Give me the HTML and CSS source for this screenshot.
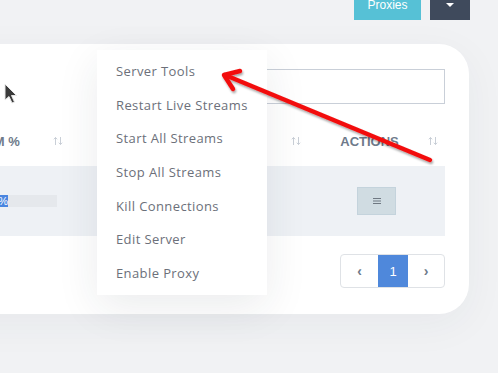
FILE: index.html
```html
<!DOCTYPE html>
<html lang="en">
<head>
  <meta charset="UTF-8">
  <title>Servers</title>
  <link rel="stylesheet" href="styles.css">
</head>
<body>
  <div class="topbar">
    <button class="btn btn-proxies">Proxies</button>
    <button class="btn btn-caret"><span class="caret"></span></button>
  </div>

  <div class="card">
    <div class="search-row">
      <input class="search" type="text">
    </div>

    <div class="table">
      <div class="thead">
        <div class="th th-left">RAM %
          <svg class="sort" width="10" height="9" viewBox="0 0 10 9"><path d="M2.5 8.5V1M0.8 2.8L2.5 1L4.2 2.8M7.5 0.5V8M5.8 6.2L7.5 8L9.2 6.2" stroke="#c3cad2" stroke-width="0.9" fill="none"/></svg>
        </div>
        <div class="th">
          <svg class="sort" width="10" height="9" viewBox="0 0 10 9"><path d="M2.5 8.5V1M0.8 2.8L2.5 1L4.2 2.8M7.5 0.5V8M5.8 6.2L7.5 8L9.2 6.2" stroke="#c3cad2" stroke-width="0.9" fill="none"/></svg>
        </div>
        <div class="th th-center">ACTIONS
          <svg class="sort" width="10" height="9" viewBox="0 0 10 9"><path d="M2.5 8.5V1M0.8 2.8L2.5 1L4.2 2.8M7.5 0.5V8M5.8 6.2L7.5 8L9.2 6.2" stroke="#c3cad2" stroke-width="0.9" fill="none"/></svg>
        </div>
      </div>
      <div class="trow">
        <div class="td td-left">
          <div class="bar"><span class="bar-fill">12%</span></div>
        </div>
        <div class="td"></div>
        <div class="td td-center">
          <button class="act-btn">
            <svg width="10" height="8" viewBox="0 0 10 8"><path d="M1 1.5h8M1 4h8M1 6.5h8" stroke="#6f7882" stroke-width="1.2"/></svg>
          </button>
        </div>
      </div>
    </div>

    <div class="pager-row">
      <div class="pager">
        <span class="pg pg-prev">‹</span>
        <span class="pg pg-active">1</span>
        <span class="pg pg-next">›</span>
      </div>
    </div>
  </div>

  <ul class="menu">
    <li>Server Tools</li>
    <li>Restart Live Streams</li>
    <li>Start All Streams</li>
    <li>Stop All Streams</li>
    <li>Kill Connections</li>
    <li>Edit Server</li>
    <li>Enable Proxy</li>
  </ul>

  <!-- annotation arrow -->
  <svg class="arrow" width="498" height="373" viewBox="0 0 498 373">
    <defs>
      <filter id="sh" x="-10%" y="-10%" width="120%" height="130%">
        <feDropShadow dx="1" dy="2" stdDeviation="1.2" flood-color="#000" flood-opacity="0.35"/>
      </filter>
    </defs>
    <g filter="url(#sh)" stroke="#f20f0f" stroke-width="4.5" fill="none" stroke-linecap="round" stroke-linejoin="round">
      <path d="M430 160 L225 75"/>
      <path d="M240 71 L224 75 L233 89"/>
    </g>
  </svg>

  <svg class="cursor" width="14" height="22" viewBox="0 0 14 22">
    <path d="M1 1 L1 17 L5 13.5 L8 20 L10.5 19 L7.5 12.5 L12.5 12.5 Z" fill="#3a3a3a" stroke="#e8e8e8" stroke-width="1"/>
  </svg>
</body>
</html>
```

FILE: styles.css
```css
html, body {
  margin: 0; padding: 0;
  background: #f1f2f4;
  overflow: hidden;
  height: 100%;
  font-family: "Liberation Sans", Arial, sans-serif;
}
.topbar {
  display: flex;
  justify-content: flex-end;
  gap: 9px;
  padding-right: 28px;
  margin-top: -10px;
}
.btn {
  height: 30px;
  border: none;
  color: #fff;
  font-family: "Liberation Sans", Arial, sans-serif;
  font-size: 12px;
  padding: 0;
}
.btn-proxies {
  width: 67px;
  background: #56c1d6;
}
.btn-caret {
  width: 40px;
  background: #3f4a5c;
  display: flex;
  justify-content: center;
  align-items: center;
}
.caret {
  width: 0; height: 0;
  border-left: 4px solid transparent;
  border-right: 4px solid transparent;
  border-top: 4px solid #fff;
}
.card {
  margin-top: 24px;
  margin-left: -60px;
  width: 529px;
  box-sizing: border-box;
  padding: 25px 24px 26px 20px;
  background: #fff;
  border-radius: 30px;
  box-shadow: 0 10px 40px rgba(40, 50, 70, 0.05);
}
.search-row {
  display: flex;
  justify-content: flex-end;
}
.search {
  width: 220px;
  height: 35px;
  box-sizing: border-box;
  border: 1px solid #c9cfd8;
  border-radius: 0;
  outline: none;
}
.thead, .trow {
  display: grid;
  grid-template-columns: 110px 238px 137px;
}
.thead {
  margin-top: 20px;
  height: 42px;
  padding-bottom: 8px;
  box-sizing: border-box;
}
.th {
  position: relative;
  display: flex;
  align-items: center;
  font-size: 13px;
  font-weight: bold;
  color: #6e7a8a;
}
.th-left { padding-left: 15px; }
.th-center {
  justify-content: center;
  padding-right: 14px;
}
.sort {
  position: absolute;
  right: 7px;
  top: 50%;
  transform: translateY(-50%);
}
.trow {
  height: 70px;
  background: #eef1f5;
}
.td {
  display: flex;
  align-items: center;
}
.td-center { justify-content: center; }
.bar {
  margin-left: 10px;
  width: 87px;
  height: 12px;
  background: #e5e8ec;
  display: flex;
}
.bar-fill {
  width: 38px;
  text-align: right;
  background: #4a86e0;
  color: #fff;
  font-size: 11px;
  line-height: 12px;
}
.act-btn {
  width: 39px;
  height: 28px;
  background: #d0dce2;
  border: 1px solid #c4d3dc;
  display: flex;
  justify-content: center;
  align-items: center;
  padding: 0;
}
.pager-row {
  display: flex;
  justify-content: flex-end;
  margin-top: 18px;
}
.pager {
  display: flex;
  height: 34px;
  border: 1px solid #dfe2e6;
  border-radius: 4px;
  overflow: hidden;
  box-sizing: border-box;
}
.pg {
  display: flex;
  justify-content: center;
  align-items: center;
  font-size: 14px;
  font-weight: bold;
  color: #6e7a8a;
}
.pg-prev { width: 37px; }
.pg-active {
  width: 30px;
  background: #4f88db;
  color: #fff;
  font-weight: normal;
  font-size: 13px;
}
.pg-next { width: 36px; }
.menu {
  position: absolute;
  left: 97px;
  top: 50px;
  width: 170px;
  height: 245px;
  box-sizing: border-box;
  margin: 0;
  padding: 4px 0 3px;
  list-style: none;
  background: #fff;
  box-shadow: 0 12px 40px rgba(30, 40, 60, 0.09);
  font-family: "Open Sans", sans-serif;
  font-size: 13px;
  letter-spacing: 0.4px;
  color: #6c707a;
}
.menu li {
  height: 33.7px;
  line-height: 34px;
  padding-left: 19px;
}
.arrow {
  position: absolute;
  left: 0; top: 0;
}
.cursor {
  position: absolute;
  left: 4px;
  top: 83px;
}
```
